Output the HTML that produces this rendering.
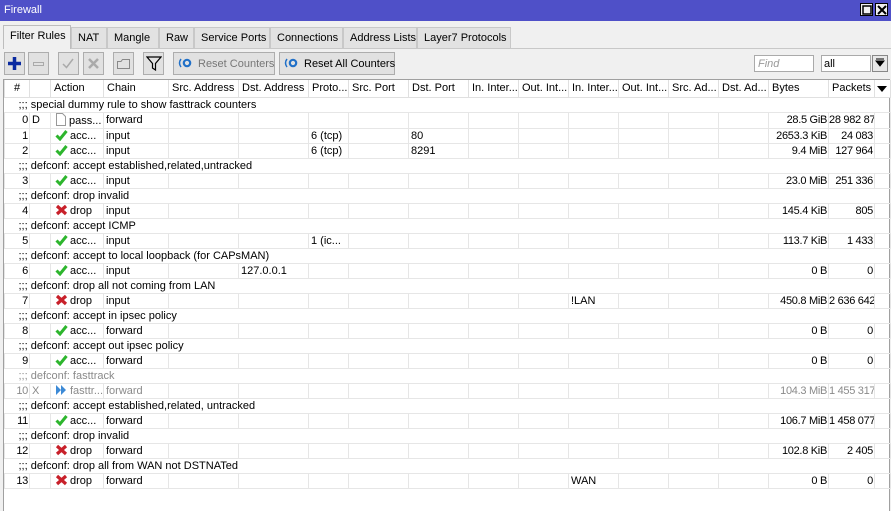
<!DOCTYPE html>
<html><head><meta charset="utf-8"><style>
*{box-sizing:border-box;margin:0;padding:0}
body{width:891px;height:511px;background:#f0f0f0;font-family:"Liberation Sans",sans-serif;font-size:11px;color:#000;position:relative;overflow:hidden;white-space:nowrap}
.title{position:absolute;left:0;top:0;width:891px;height:21px;background:#4f50c8;color:#fff;padding:4px 0 0 4px;font-size:11px}
.wb{position:absolute;top:3px;width:13px;height:13px;background:#f0f0f0;border:1px solid #000}
.tabs{position:absolute;top:25px;left:3px;height:23px}
.tab{position:absolute;top:2px;height:21px;background:#e2e2e2;border:1px solid #c8c8c8;border-bottom:none;padding:4px 0 0 6px;font-size:11px}
.tab.a{top:0;height:24px;background:#f0f0f0;padding-top:4px;border-color:#bdbdbd}
.panel{position:absolute;top:48px;left:3px;width:888px;height:463px;border-top:1px solid #c8c8c8}
.btn{position:absolute;top:52px;height:23px;border:1px solid #adadad;background:#e1e1e1}
.bt{position:absolute;top:52px;height:23px;border:1px solid #adadad;background:#e1e1e1;padding:5px 0 0 24px}
.grid{position:absolute;left:3px;top:79px;width:887px;height:432px;background:#fff;border:1px solid #a0a0a0;border-bottom:none}
table{border-collapse:collapse;table-layout:fixed;width:886px}
td{height:15px;line-height:14px;border:1px solid #e6e6e6;border-top:none;white-space:nowrap;overflow:hidden;padding:0 2px;font-size:11px}
tr.h td{height:17px;background:#fff;border:1px solid #e0e0e0;border-top:none;padding:1px 3px}
td.r{text-align:right;padding:0 1px 0 0;letter-spacing:-0.3px}
tr.c td{border-left:none;border-right:none;padding-left:14px}
tr.g td{color:#8a8a8a}
tr.dash td{border-top:1px dotted #777}
svg{vertical-align:-2px;margin:0 2px 0 2px}
</style></head><body>
<div class="title">Firewall</div>
<div class="wb" style="left:860px"></div><div class="wb" style="left:875px"></div>
<svg style="position:absolute;left:862px;top:5px;margin:0" width="10" height="10"><rect x="1" y="1" width="8" height="8" fill="none" stroke="#000" stroke-width="1.5"/></svg>
<svg style="position:absolute;left:877px;top:5px;margin:0" width="10" height="10"><path d="M1 1L9 9M9 1L1 9" stroke="#000" stroke-width="2"/></svg>
<div class="panel"></div>
<div class="tabs">
<div class="tab" style="left:68px;width:36px">NAT</div>
<div class="tab" style="left:104px;width:52px">Mangle</div>
<div class="tab" style="left:156px;width:35px">Raw</div>
<div class="tab" style="left:191px;width:76px">Service Ports</div>
<div class="tab" style="left:267px;width:73px">Connections</div>
<div class="tab" style="left:340px;width:74px">Address Lists</div>
<div class="tab" style="left:414px;width:94px">Layer7 Protocols</div>
<div class="tab a" style="left:0;width:68px">Filter Rules</div>
</div>
<div class="btn" style="left:4px;width:21px"></div>
<svg style="position:absolute;left:7px;top:56px;margin:0" width="15" height="15"><path d="M7.5 1V14M1 7.5H14" stroke="#0a2aa0" stroke-width="3.5"/></svg>
<div class="btn" style="left:28px;width:21px"></div>
<div style="position:absolute;left:33px;top:62px;width:11px;height:4px;border:1px solid #aaa"></div>
<div class="btn" style="left:58px;width:21px"></div>
<svg style="position:absolute;left:61px;top:57px;margin:0" width="14" height="13"><path d="M2 7L5.5 10.5L12 2" fill="none" stroke="#aaa" stroke-width="1.5"/></svg>
<div class="btn" style="left:83px;width:21px"></div>
<svg style="position:absolute;left:87px;top:57px;margin:0" width="13" height="13"><path d="M2 2L11 11M11 2L2 11" stroke="#aaa" stroke-width="2.5"/></svg>
<div class="btn" style="left:113px;width:21px"></div>
<svg style="position:absolute;left:116px;top:57px;margin:0" width="15" height="13"><path d="M1.5 4.5H5L6.5 2.5H13.5V11.5H1.5Z" fill="none" stroke="#888"/></svg>
<div class="btn" style="left:143px;width:21px"></div>
<svg style="position:absolute;left:146px;top:55px;margin:0" width="16" height="17"><path d="M1 2H15L9.5 8.5V15L6.5 13V8.5Z" fill="none" stroke="#000" stroke-width="1.2"/></svg>
<div class="bt" style="left:173px;width:102px;color:#777">Reset Counters</div>
<div class="bt" style="left:279px;width:116px">Reset All Counters</div>
<svg style="position:absolute;left:178px;top:58px;margin:0" width="14" height="10"><circle cx="9" cy="5" r="3.2" fill="none" stroke="#2070c8" stroke-width="2.2"/><path d="M3 1Q0 5 3 9" fill="none" stroke="#2070c8" stroke-width="1.5"/></svg>
<svg style="position:absolute;left:284px;top:58px;margin:0" width="14" height="10"><circle cx="9" cy="5" r="3.2" fill="none" stroke="#2070c8" stroke-width="2.2"/><path d="M3 1Q0 5 3 9" fill="none" stroke="#2070c8" stroke-width="1.5"/></svg>
<div style="position:absolute;left:754px;top:55px;width:60px;height:17px;background:#fff;border:1px solid #aaa;color:#999;font-style:italic;padding:2px 3px">Find</div>
<div style="position:absolute;left:821px;top:55px;width:50px;height:17px;background:#fff;border:1px solid #aaa;padding:2px 2px">all</div>
<div style="position:absolute;left:872px;top:55px;width:16px;height:17px;background:#e8e8e8;border:1px solid #888"></div>
<svg style="position:absolute;left:875px;top:58px;margin:0" width="10" height="10"><path d="M1 1H9M1 3H9L5 8Z" fill="#000" stroke="#000" stroke-width="1"/></svg>
<div class="grid"><table>
<colgroup><col style="width:25px"><col style="width:21px"><col style="width:53px"><col style="width:65px"><col style="width:70px"><col style="width:70px"><col style="width:40px"><col style="width:60px"><col style="width:60px"><col style="width:50px"><col style="width:50px"><col style="width:50px"><col style="width:50px"><col style="width:50px"><col style="width:50px"><col style="width:60px"><col style="width:46px"><col style="width:16px"></colgroup>
<tr class="h"><td style="text-align:center">#</td><td></td><td>Action</td><td>Chain</td><td>Src. Address</td><td>Dst. Address</td><td>Proto...</td><td>Src. Port</td><td>Dst. Port</td><td>In. Inter...</td><td>Out. Int...</td><td>In. Inter...</td><td>Out. Int...</td><td>Src. Ad...</td><td>Dst. Ad...</td><td>Bytes</td><td>Packets</td><td style="padding:0 2px"><svg width="10" height="8" style="margin:0"><path d="M0 1H10L5 7Z" fill="#000"/></svg></td></tr>
<tr class="c"><td colspan="18">;;; special dummy rule to show fasttrack counters</td></tr>
<tr><td class="r">0</td><td>D</td><td><svg width="12" height="13"><path d="M1.5 .5H7.5L10.5 3.5V12.5H1.5Z" fill="#fff" stroke="#999"/></svg>pass...</td><td>forward</td><td></td><td></td><td></td><td></td><td></td><td></td><td></td><td></td><td></td><td></td><td></td><td class="r">28.5 GiB</td><td class="r">28 982 872</td><td></td></tr>
<tr><td class="r">1</td><td></td><td><svg width="13" height="12"><path d="M1.5 6.5L5 10L11.5 2" fill="none" stroke="#2db52d" stroke-width="3"/></svg>acc...</td><td>input</td><td></td><td></td><td>6 (tcp)</td><td></td><td>80</td><td></td><td></td><td></td><td></td><td></td><td></td><td class="r">2653.3 KiB</td><td class="r">24 083</td><td></td></tr>
<tr><td class="r">2</td><td></td><td><svg width="13" height="12"><path d="M1.5 6.5L5 10L11.5 2" fill="none" stroke="#2db52d" stroke-width="3"/></svg>acc...</td><td>input</td><td></td><td></td><td>6 (tcp)</td><td></td><td>8291</td><td></td><td></td><td></td><td></td><td></td><td></td><td class="r">9.4 MiB</td><td class="r">127 964</td><td></td></tr>
<tr class="c"><td colspan="18">;;; defconf: accept established,related,untracked</td></tr>
<tr><td class="r">3</td><td></td><td><svg width="13" height="12"><path d="M1.5 6.5L5 10L11.5 2" fill="none" stroke="#2db52d" stroke-width="3"/></svg>acc...</td><td>input</td><td></td><td></td><td></td><td></td><td></td><td></td><td></td><td></td><td></td><td></td><td></td><td class="r">23.0 MiB</td><td class="r">251 336</td><td></td></tr>
<tr class="c"><td colspan="18">;;; defconf: drop invalid</td></tr>
<tr><td class="r">4</td><td></td><td><svg width="13" height="12"><path d="M2 2L11 10M11 2L2 10" stroke="#c8202a" stroke-width="3.2"/></svg>drop</td><td>input</td><td></td><td></td><td></td><td></td><td></td><td></td><td></td><td></td><td></td><td></td><td></td><td class="r">145.4 KiB</td><td class="r">805</td><td></td></tr>
<tr class="c"><td colspan="18">;;; defconf: accept ICMP</td></tr>
<tr><td class="r">5</td><td></td><td><svg width="13" height="12"><path d="M1.5 6.5L5 10L11.5 2" fill="none" stroke="#2db52d" stroke-width="3"/></svg>acc...</td><td>input</td><td></td><td></td><td>1 (ic...</td><td></td><td></td><td></td><td></td><td></td><td></td><td></td><td></td><td class="r">113.7 KiB</td><td class="r">1 433</td><td></td></tr>
<tr class="c"><td colspan="18">;;; defconf: accept to local loopback (for CAPsMAN)</td></tr>
<tr><td class="r">6</td><td></td><td><svg width="13" height="12"><path d="M1.5 6.5L5 10L11.5 2" fill="none" stroke="#2db52d" stroke-width="3"/></svg>acc...</td><td>input</td><td></td><td>127.0.0.1</td><td></td><td></td><td></td><td></td><td></td><td></td><td></td><td></td><td></td><td class="r">0 B</td><td class="r">0</td><td></td></tr>
<tr class="c"><td colspan="18">;;; defconf: drop all not coming from LAN</td></tr>
<tr><td class="r">7</td><td></td><td><svg width="13" height="12"><path d="M2 2L11 10M11 2L2 10" stroke="#c8202a" stroke-width="3.2"/></svg>drop</td><td>input</td><td></td><td></td><td></td><td></td><td></td><td></td><td></td><td>!LAN</td><td></td><td></td><td></td><td class="r">450.8 MiB</td><td class="r">2 636 642</td><td></td></tr>
<tr class="c"><td colspan="18">;;; defconf: accept in ipsec policy</td></tr>
<tr><td class="r">8</td><td></td><td><svg width="13" height="12"><path d="M1.5 6.5L5 10L11.5 2" fill="none" stroke="#2db52d" stroke-width="3"/></svg>acc...</td><td>forward</td><td></td><td></td><td></td><td></td><td></td><td></td><td></td><td></td><td></td><td></td><td></td><td class="r">0 B</td><td class="r">0</td><td></td></tr>
<tr class="c"><td colspan="18">;;; defconf: accept out ipsec policy</td></tr>
<tr><td class="r">9</td><td></td><td><svg width="13" height="12"><path d="M1.5 6.5L5 10L11.5 2" fill="none" stroke="#2db52d" stroke-width="3"/></svg>acc...</td><td>forward</td><td></td><td></td><td></td><td></td><td></td><td></td><td></td><td></td><td></td><td></td><td></td><td class="r">0 B</td><td class="r">0</td><td></td></tr>
<tr class="c g dash"><td colspan="18">;;; defconf: fasttrack</td></tr>
<tr class="g"><td class="r">10</td><td>X</td><td><svg width="13" height="12"><path d="M1 1L6 6L1 11ZM6 1L11 6L6 11Z" fill="#3d8ad6"/></svg>fasttr...</td><td>forward</td><td></td><td></td><td></td><td></td><td></td><td></td><td></td><td></td><td></td><td></td><td></td><td class="r">104.3 MiB</td><td class="r">1 455 317</td><td></td></tr>
<tr class="c"><td colspan="18">;;; defconf: accept established,related, untracked</td></tr>
<tr><td class="r">11</td><td></td><td><svg width="13" height="12"><path d="M1.5 6.5L5 10L11.5 2" fill="none" stroke="#2db52d" stroke-width="3"/></svg>acc...</td><td>forward</td><td></td><td></td><td></td><td></td><td></td><td></td><td></td><td></td><td></td><td></td><td></td><td class="r">106.7 MiB</td><td class="r">1 458 077</td><td></td></tr>
<tr class="c"><td colspan="18">;;; defconf: drop invalid</td></tr>
<tr><td class="r">12</td><td></td><td><svg width="13" height="12"><path d="M2 2L11 10M11 2L2 10" stroke="#c8202a" stroke-width="3.2"/></svg>drop</td><td>forward</td><td></td><td></td><td></td><td></td><td></td><td></td><td></td><td></td><td></td><td></td><td></td><td class="r">102.8 KiB</td><td class="r">2 405</td><td></td></tr>
<tr class="c"><td colspan="18">;;; defconf: drop all from WAN not DSTNATed</td></tr>
<tr><td class="r">13</td><td></td><td><svg width="13" height="12"><path d="M2 2L11 10M11 2L2 10" stroke="#c8202a" stroke-width="3.2"/></svg>drop</td><td>forward</td><td></td><td></td><td></td><td></td><td></td><td></td><td></td><td>WAN</td><td></td><td></td><td></td><td class="r">0 B</td><td class="r">0</td><td></td></tr>
</table></div>
</body></html>
